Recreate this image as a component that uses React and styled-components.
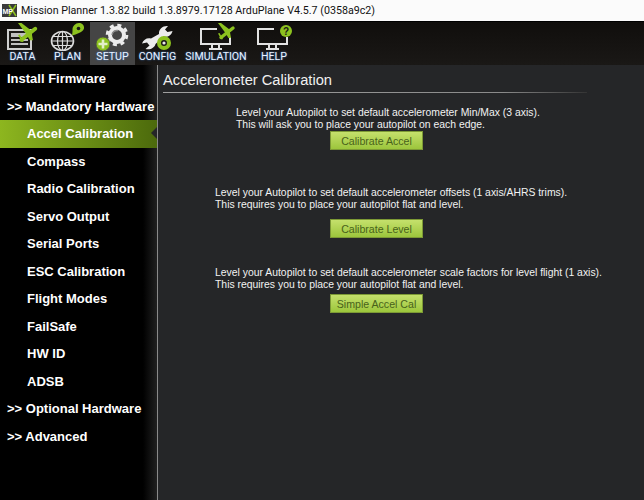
import React from "react";
import styled, { createGlobalStyle } from "styled-components";

const GlobalStyle = createGlobalStyle`
  html, body {
    margin: 0;
    padding: 0;
    background: #252628;
  }
  body {
    font-family: "Liberation Sans", Arial, sans-serif;
  }
`;

const Page = styled.div`
  width: 644px;
  height: 500px;
  display: flex;
  flex-direction: column;
  overflow: hidden;
`;

const TitleBar = styled.div`
  height: 21px;
  flex: none;
  background: #fbfbfb;
  display: flex;
  align-items: center;
  gap: 4px;
  padding: 0 0 1px 2px;
  box-sizing: border-box;
  font-family: Roboto, sans-serif;
  font-size: 10.7px;
  color: #111;
  white-space: nowrap;
`;

const TopBar = styled.div`
  height: 44px;
  flex: none;
  display: flex;
  background: linear-gradient(#100e0c, #1a1816);
  border-top: 1px solid #000;
  box-sizing: border-box;
`;

const NavItem = styled.div`
  width: ${(p) => p.$w}px;
  flex: none;
  display: flex;
  flex-direction: column;
  align-items: center;
  background: ${(p) => (p.$active ? "#454545" : "transparent")};
  svg {
    display: block;
    flex: none;
  }
`;

const NavLabel = styled.span`
  font-family: Roboto, sans-serif;
  font-size: 10.6px;
  line-height: 13px;
  margin-top: -1px;
  color: #e9f2ff;
  text-shadow: 0 0 2px #3d7fd6;
  white-space: nowrap;
`;

const Body = styled.div`
  flex: 1;
  display: flex;
  min-height: 0;
`;

const Sidebar = styled.div`
  width: 157px;
  flex: none;
  background: linear-gradient(90deg, #000 0, #000 143px, #202020 157px);
  border-right: 1px solid #8a8a8a;
  display: flex;
  flex-direction: column;
`;

const MenuItem = styled.div`
  position: relative;
  height: 27.5px;
  flex: none;
  display: flex;
  align-items: center;
  box-sizing: border-box;
  padding-left: ${(p) => (p.$sub ? 27 : 7)}px;
  font-size: 13px;
  font-weight: bold;
  color: #fff;
  white-space: nowrap;
  background: ${(p) =>
    p.$active ? "linear-gradient(90deg, #8db61f, #4c6a0c)" : "none"};

  ${(p) =>
    p.$active &&
    `
    &::after {
      content: "";
      position: absolute;
      right: 0;
      top: 7px;
      border-top: 6.5px solid transparent;
      border-bottom: 6.5px solid transparent;
      border-right: 6px solid #252628;
    }
  `}
`;

const Main = styled.div`
  flex: 1;
  background: #252628;
  padding-left: 5px;
  display: flex;
  flex-direction: column;
`;

const Heading = styled.h1`
  margin: 0;
  width: 424px;
  height: 28px;
  box-sizing: border-box;
  padding-top: 7px;
  font-size: 14.7px;
  line-height: 17px;
  font-weight: normal;
  color: #f0f0f0;
  border-bottom: 1px solid;
  border-image: linear-gradient(90deg, #a0a0a0, #8a8a8a 80%, #333) 1;
`;

const Section = styled.div`
  margin-top: ${(p) => p.$top}px;
  display: flex;
  flex-direction: column;
  align-items: flex-start;
`;

const Lines = styled.p`
  margin: 0 0 0 ${(p) => p.$left}px;
  font-size: 10.4px;
  line-height: 12px;
  color: #f2f2f2;
  white-space: nowrap;
`;

const CalButton = styled.button`
  margin: ${(p) => p.$gap}px 0 0 167px;
  width: 93px;
  height: 19px;
  padding: 0;
  box-sizing: border-box;
  border: 1px solid #7d9a35;
  background: linear-gradient(#c5e06c, #9cc63c);
  font-family: inherit;
  font-size: 10.6px;
  color: #48621a;
`;

const GREEN = "#8dc21f";
const BAR = "#1a1816";

// little jet, about 16x16 before scaling
const Plane = ({ x, y, s = 1 }) => (
  <g transform={`translate(${x} ${y}) scale(${s})`} fill={GREEN}>
    <path d="M3 14.500 15 5" stroke={GREEN} strokeWidth="3.400" strokeLinecap="round" />
    <path d="M0 0h3l8.500 6.500 1.500 8.500h-2.500L6 8z" />
    <path d="M0 10.500l1.500-.5 3.500 6-1.500.5z" />
  </g>
);

const Monitor = ({ x }) => (
  <g transform={`translate(${x} 0)`} fill="none" stroke="#e2e2e2">
    <path d="M17 7H1v15h29v-7" strokeWidth="2" />
    <path d="M12 23v3M19 23v3" strokeWidth="2" />
    <path d="M9 27h13" strokeWidth="2" />
  </g>
);

const DataIcon = () => (
  <svg width="45" height="29" viewBox="0 0 45 29">
    <path d="M8 8h23v19H8z" fill={BAR} stroke="#d0d0d0" strokeWidth="2" />
    <path d="M11 11h17v4H11zM11 17h17v2H11zM11 21h17v2H11z" fill="#c0c0c0" />
    <Plane x={18} y={1} s={1.150} />
  </svg>
);

const PlanIcon = () => (
  <svg width="45" height="29" viewBox="0 0 45 29">
    <g fill="none" stroke="#dcdcdc" strokeWidth="1.200">
      <ellipse cx="17.500" cy="19" rx="11" ry="9.500" strokeWidth="1.600" />
      <ellipse cx="17.500" cy="19" rx="5" ry="9.500" />
      <path d="M17.500 9.500v19M6.500 19h22M8 14.500h19M8 23.500h19" />
    </g>
    <path
      d="M27 13.500c.5-2.500.5-4 .5-6 0-3.500 3-6.500 6.500-6.500 3.500 0 5.500 2.500 5 5.500-.5 2.500-3 3.500-5 4.500-2.500 1-4.500 2-7 2.500z"
      fill={GREEN}
    />
    <circle cx="33.500" cy="6.500" r="1.800" fill={BAR} />
  </svg>
);

const SetupIcon = () => (
  <svg width="45" height="29" viewBox="0 0 45 29">
    <g fill="none" stroke="#ececec">
      <circle cx="27" cy="13" r="9.800" strokeWidth="3" strokeDasharray="4 3.700" />
      <circle cx="27" cy="13" r="7" strokeWidth="4" />
    </g>
    <path d="M22 13a5 5 0 0 1 6-4.500" stroke="#8a8a8a" strokeWidth="1.500" fill="none" />
    <circle cx="13" cy="22" r="7" fill={GREEN} stroke="#454545" strokeWidth="0.800" />
    <path d="M11.700 17.500h2.600v3.200h3.200v2.600h-3.200v3.200h-2.600v-3.200H8.500v-2.600h3.200z" fill="#e4efc8" />
  </svg>
);

const ConfigIcon = () => (
  <svg width="45" height="29" viewBox="0 0 45 29">
    <path
      d="M33 4c-5-.5-9.500 3-9 8l-8 4.500c-4-1-7.500 1-9 5l5-1 2.500 3-4 3.500c5 1 9-1 10-5l8-7.500c4 1 8-1 9-5.500l-5 1-2.500-2.500z"
      fill="#ececec"
    />
    <circle cx="29" cy="21" r="5" fill={BAR} stroke={GREEN} strokeWidth="4" />
    <circle cx="29" cy="21" r="1.600" fill="#e8e8e8" />
  </svg>
);

const SimIcon = () => (
  <svg width="72" height="29" viewBox="0 0 72 29">
    <Monitor x={20} />
    <Plane x={38} y={1} />
  </svg>
);

const HelpIcon = () => (
  <svg width="44" height="29" viewBox="0 0 44 29">
    <Monitor x={5} />
    <circle cx="34" cy="9" r="6" fill={GREEN} />
    <text x="34" y="12.500" textAnchor="middle" fontSize="10" fontWeight="bold" fontFamily="Liberation Sans" fill={BAR}>
      ?
    </text>
  </svg>
);

const AppLogo = () => (
  <svg width="15" height="13" viewBox="0 0 15 13">
    <rect width="15" height="13" fill="#3a3a3a" />
    <path d="M7 1l7 11M14 1L7 12" stroke={GREEN} strokeWidth="1.500" />
    <text x="0.500" y="9.500" fontSize="7" fontWeight="bold" fill="#fff" fontFamily="Liberation Sans">
      MP
    </text>
  </svg>
);

const navItems = [
  { label: "DATA", w: 45, Icon: DataIcon },
  { label: "PLAN", w: 45, Icon: PlanIcon },
  { label: "SETUP", w: 45, Icon: SetupIcon, active: true },
  { label: "CONFIG", w: 45, Icon: ConfigIcon },
  { label: "SIMULATION", w: 72, Icon: SimIcon },
  { label: "HELP", w: 44, Icon: HelpIcon },
];

const menuItems = [
  { label: "Install Firmware" },
  { label: ">> Mandatory Hardware" },
  { label: "Accel Calibration", sub: true, active: true },
  { label: "Compass", sub: true },
  { label: "Radio Calibration", sub: true },
  { label: "Servo Output", sub: true },
  { label: "Serial Ports", sub: true },
  { label: "ESC Calibration", sub: true },
  { label: "Flight Modes", sub: true },
  { label: "FailSafe", sub: true },
  { label: "HW ID", sub: true },
  { label: "ADSB", sub: true },
  { label: ">> Optional Hardware" },
  { label: ">> Advanced" },
];

const sections = [
  {
    top: 14,
    left: 73,
    gap: 0,
    lines: [
      "Level your Autopilot to set default accelerometer Min/Max (3 axis).",
      "This will ask you to place your autopilot on each edge.",
    ],
    button: "Calibrate Accel",
  },
  {
    top: 37,
    left: 52,
    gap: 8,
    lines: [
      "Level your Autopilot to set default accelerometer offsets (1 axis/AHRS trims).",
      "This requires you to place your autopilot flat and level.",
    ],
    button: "Calibrate Level",
  },
  {
    top: 29,
    left: 52,
    gap: 3,
    lines: [
      "Level your Autopilot to set default accelerometer scale factors for level flight (1 axis).",
      "This requires you to place your autopilot flat and level.",
    ],
    button: "Simple Accel Cal",
  },
];

export default function App() {
  return (
    <Page>
      <GlobalStyle />
      <TitleBar>
        <AppLogo />
        Mission Planner 1.3.82 build 1.3.8979.17128 ArduPlane V4.5.7 (0358a9c2)
      </TitleBar>
      <TopBar>
        {navItems.map(({ label, w, Icon, active }) => (
          <NavItem key={label} $w={w} $active={active}>
            <Icon />
            <NavLabel>{label}</NavLabel>
          </NavItem>
        ))}
      </TopBar>
      <Body>
        <Sidebar>
          {menuItems.map((item) => (
            <MenuItem key={item.label} $sub={item.sub} $active={item.active}>
              {item.label}
            </MenuItem>
          ))}
        </Sidebar>
        <Main>
          <Heading>Accelerometer Calibration</Heading>
          {sections.map((s) => (
            <Section key={s.button} $top={s.top}>
              <Lines $left={s.left}>
                {s.lines[0]}
                <br />
                {s.lines[1]}
              </Lines>
              <CalButton $gap={s.gap}>{s.button}</CalButton>
            </Section>
          ))}
        </Main>
      </Body>
    </Page>
  );
}
